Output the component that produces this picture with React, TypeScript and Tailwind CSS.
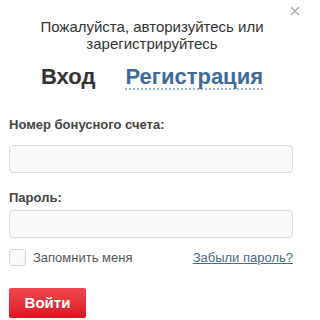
const App = () => {
  return (
    <div className="relative w-[304px] h-[320px] bg-white overflow-hidden font-['Liberation_Sans',Arial,sans-serif]">
      <button className="absolute left-[290px] top-[6px] w-[10px] h-[10px]">
        <svg width="10" height="10" viewBox="0 0 10 10">
          <path d="M1 1 L9 9 M9 1 L1 9" stroke="#b0b0b0" strokeWidth="1.6" />
        </svg>
      </button>
      <div className="pt-[18px] text-center text-[15px] leading-[17px] text-[#333]">
        Пожалуйста, авторизуйтесь или
        <br />
        зарегистрируйтесь
      </div>
      <div className="mt-[14px] flex justify-center gap-[30px] text-[22px] font-bold leading-[22px]">
        <span className="text-[#333]">Вход</span>
        <span className="text-[#3f6a9c] border-b-2 border-dotted border-[#9fb3cc]">
          Регистрация
        </span>
      </div>
      <div className="pl-[9px] pr-[11px] mt-[27px]">
        <label className="block text-[13px] font-bold text-[#444] leading-[16px]">
          Номер бонусного счета:
        </label>
        <input
          type="text"
          className="mt-[12px] block w-full h-[28px] rounded-[4px] border border-[#dcdcdc] bg-[#fafafa] outline-none"
        />
        <label className="block mt-[17px] text-[13px] font-bold text-[#444] leading-[16px]">
          Пароль:
        </label>
        <input
          type="password"
          className="mt-[4px] block w-full h-[28px] rounded-[4px] border border-[#dcdcdc] bg-[#fafafa] outline-none"
        />
        <div className="mt-[11px] flex items-center justify-between h-[17px]">
          <label className="flex items-center gap-[7px] text-[13px] leading-[16px] text-[#555]">
            <span className="block w-[17px] h-[17px] rounded-[3px] border border-[#d6d6d6] bg-[#fafafa]" />
            Запомнить меня
          </label>
          <a href="#" className="text-[13px] leading-[16px] text-[#4d6a87] underline">
            Забыли пароль?
          </a>
        </div>
        <button className="mt-[22px] block w-[77px] h-[30px] rounded-[2px] bg-gradient-to-b from-[#f0474f] to-[#d9141e] text-white font-bold text-[15px]">
          Войти
        </button>
      </div>
    </div>
  );
};

export default App;
